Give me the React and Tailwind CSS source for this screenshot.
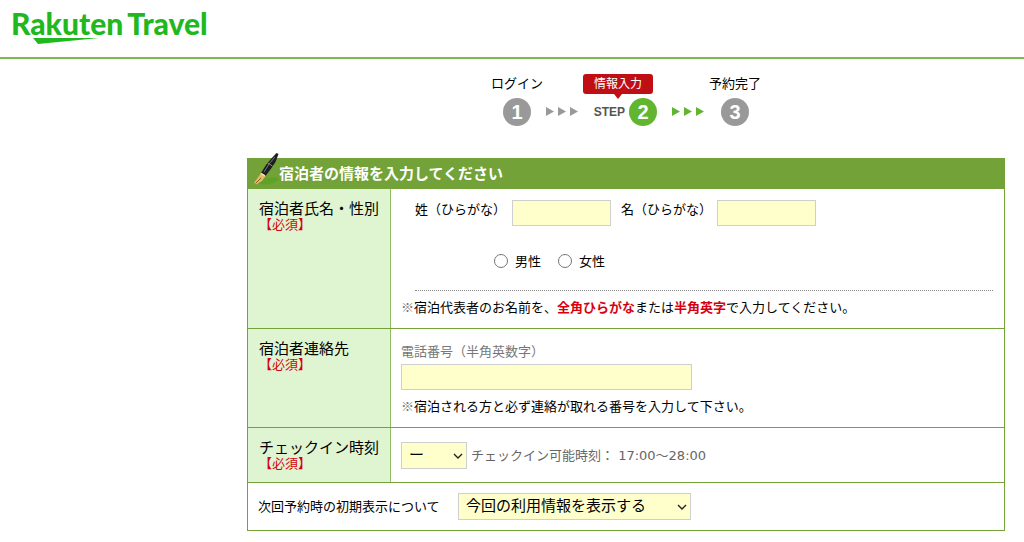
import React, { useState } from 'react';

const fieldStyle = 'border border-[#cfcfcf] bg-[#ffffcc] outline-none rounded-none';

function Logo() {
  return (
    <a
      href="#top"
      className="relative inline-flex gap-1 font-['Lato',sans-serif] text-[30px] leading-9 font-black text-[#1fb81f]"
    >
      <span>Rakuten</span>
      <span>Travel</span>
      <svg width="66" height="6" viewBox="0 0 66 6" fill="currentColor" className="absolute bottom-[-3px] left-[22px]" aria-hidden="true">
        <path d="M0 0H66L5 6Z" />
      </svg>
    </a>
  );
}

function Arrows({ className }) {
  return (
    <svg width="34" height="28" viewBox="0 0 34 28" fill="currentColor" className={className} aria-hidden="true">
      <path d="M1 9L9 13.5L1 18ZM13 9L21 13.5L13 18ZM25 9L33 13.5L25 18Z" />
    </svg>
  );
}

function StepNumber({ children, className }) {
  return (
    <span className={`flex h-7 w-7 items-center justify-center rounded-full font-['Liberation_Sans',sans-serif] text-xl font-bold text-white ${className}`}>
      {children}
    </span>
  );
}

function Steps() {
  return (
    <div className="flex items-end justify-center text-[13px] leading-5">
      <div className="flex w-[52px] flex-col items-center gap-1">
        <span>ログイン</span>
        <StepNumber className="bg-[#999999]">1</StepNumber>
      </div>
      <Arrows className="ml-0.5 text-[#999999]" />
      <div className="ml-1 flex w-[74px] flex-col gap-1">
        <div className="relative h-5 w-[70px] rounded-[3px] bg-[#bf0f15] text-center text-xs leading-5 text-white">
          情報入力
          <svg width="8" height="5" viewBox="0 0 8 5" className="absolute top-full left-[31px]" aria-hidden="true">
            <path d="M0 0H8L4 5Z" fill="#bf0f15" />
          </svg>
        </div>
        <div className="flex items-center justify-end gap-1">
          <span className="font-['Liberation_Sans',sans-serif] text-xs font-bold text-[#555]">STEP</span>
          <StepNumber className="bg-[#62b62f]">2</StepNumber>
        </div>
      </div>
      <Arrows className="ml-3.5 text-[#62b62f]" />
      <div className="ml-1 flex w-[52px] flex-col items-center gap-1">
        <span>予約完了</span>
        <StepNumber className="bg-[#999999]">3</StepNumber>
      </div>
    </div>
  );
}

function PenIcon() {
  return (
    <svg width="30" height="36" viewBox="0 0 30 36" className="absolute bottom-0 left-1" aria-hidden="true">
      <ellipse cx="17" cy="28" rx="10" ry="3" fill="#58a51f" opacity="0.8" transform="rotate(-12 17 28)" />
      <path d="M24.5 0L26.5 1L23.5 9L19.5 15L13.5 23L9 20L14 12L19 6Z" fill="#1c1d22" />
      <path d="M23 4L17 11L12 19" stroke="#777b80" strokeWidth="1" fill="none" />
      <path d="M15.5 10L20.5 13" stroke="#8f8870" strokeWidth="1" />
      <path d="M9 20L13.5 23L10 28L4 31.5L2 30L5.5 25Z" fill="#e5b866" />
      <path d="M3.5 30.5L9 25" stroke="#8a6425" strokeWidth="1" />
      <path d="M9 20.5L13 23" stroke="#f3dfa9" strokeWidth="1.5" />
    </svg>
  );
}

function Row({ label, children }) {
  return (
    <div className="flex border-b border-[#72a238]">
      <div className="w-[143px] shrink-0 border-r border-[#8fbd62] bg-[#dff4d0] pt-2.5 pl-[11px]">
        <div className="text-[15px] leading-5">{label}</div>
        <div className="text-[13px] leading-3 text-[#d7000f]">【必須】</div>
      </div>
      <div className="min-w-0 flex-1 pr-[11px] pl-2.5">{children}</div>
    </div>
  );
}

function Select({ children, className, ...props }) {
  return (
    <div className={`relative ${className}`}>
      <select {...props} className={`h-[27px] w-full appearance-none pl-[7px] text-[15px] ${fieldStyle}`}>
        {children}
      </select>
      <svg width="10" height="6" viewBox="0 0 10 6" className="pointer-events-none absolute top-[11px] right-1" aria-hidden="true">
        <path d="M1 1L5 5L9 1" fill="none" stroke="#222" strokeWidth="1.4" />
      </svg>
    </div>
  );
}

function GenderOption({ value, label, gender, onChange }) {
  return (
    <label className="flex items-center gap-[7px]">
      <input
        type="radio"
        name="gender"
        value={value}
        checked={gender === value}
        onChange={() => onChange(value)}
        className="-mt-0.5 h-3.5 w-3.5 appearance-none rounded-full border border-[#767676] bg-white checked:border-4"
      />
      {label}
    </label>
  );
}

function App() {
  const [gender, setGender] = useState('');

  return (
    <div className="bg-white pb-3 font-['Liberation_Sans','Noto_Sans_CJK_JP',sans-serif] text-[13px] text-black">
      <header className="h-[59px] border-b-2 border-[#7fb850] pt-[5px] pl-[11px]">
        <Logo />
      </header>

      <main className="mr-[19px] ml-[247px] pt-[15px]">
        <Steps />

        <form className="mt-8 border-x border-[#72a238]">
          <div className="relative h-[31px] bg-[#72a238] pl-[31px]">
            <PenIcon />
            <h1 className="text-[15px] leading-8 font-bold text-white">宿泊者の情報を入力してください</h1>
          </div>

          <Row label="宿泊者氏名・性別">
            <div className="flex pt-[11px] pl-3.5">
              <label htmlFor="sei" className="w-[97px] leading-5">姓（ひらがな）</label>
              <input id="sei" type="text" className={`h-[26px] w-[99px] px-1 ${fieldStyle}`} />
              <label htmlFor="mei" className="ml-2.5 w-24 leading-5">名（ひらがな）</label>
              <input id="mei" type="text" className={`h-[26px] w-[99px] px-1 ${fieldStyle}`} />
            </div>
            <div className="mt-[26px] flex gap-[17px] pl-[93px] leading-5">
              <GenderOption value="male" label="男性" gender={gender} onChange={setGender} />
              <GenderOption value="female" label="女性" gender={gender} onChange={setGender} />
            </div>
            <div className="mt-[18px] ml-3.5 border-t border-dotted border-[#888]" />
            <p className="pt-[7px] pb-2.5 leading-5">
              <span className="text-[#777]">※</span>宿泊代表者のお名前を、
              <b className="text-[#d7000f]">全角ひらがな</b>または
              <b className="text-[#d7000f]">半角英字</b>で入力してください。
            </p>
          </Row>

          <Row label="宿泊者連絡先">
            <label htmlFor="tel" className="block pt-[13px] leading-5 text-[#777]">電話番号（半角英数字）</label>
            <input id="tel" type="tel" className={`mt-0.5 block h-[26px] w-[291px] px-1 ${fieldStyle}`} />
            <p className="pt-[7px] pb-2.5 leading-5">
              <span className="text-[#777]">※</span>宿泊される方と必ず連絡が取れる番号を入力して下さい。
            </p>
          </Row>

          <Row label="チェックイン時刻">
            <div className="flex items-center gap-1 pt-3.5 pb-[13px]">
              <Select className="w-[66px]" aria-label="チェックイン時刻" defaultValue="">
                <option value="">ー</option>
                <option value="17:00">17:00</option>
                <option value="18:00">18:00</option>
              </Select>
              <span className="font-['DejaVu_Sans','Noto_Sans_CJK_JP',sans-serif] text-[#666]">
                チェックイン可能時刻： 17:00～28:00
              </span>
            </div>
          </Row>

          <div className="flex items-center border-b border-[#72a238] py-2.5 pl-2.5">
            <label htmlFor="next" className="w-[200px]">次回予約時の初期表示について</label>
            <Select id="next" className="w-[233px]">
              <option>今回の利用情報を表示する</option>
              <option>前回の利用情報を表示する</option>
            </Select>
          </div>
        </form>
      </main>
    </div>
  );
}

export default App;
